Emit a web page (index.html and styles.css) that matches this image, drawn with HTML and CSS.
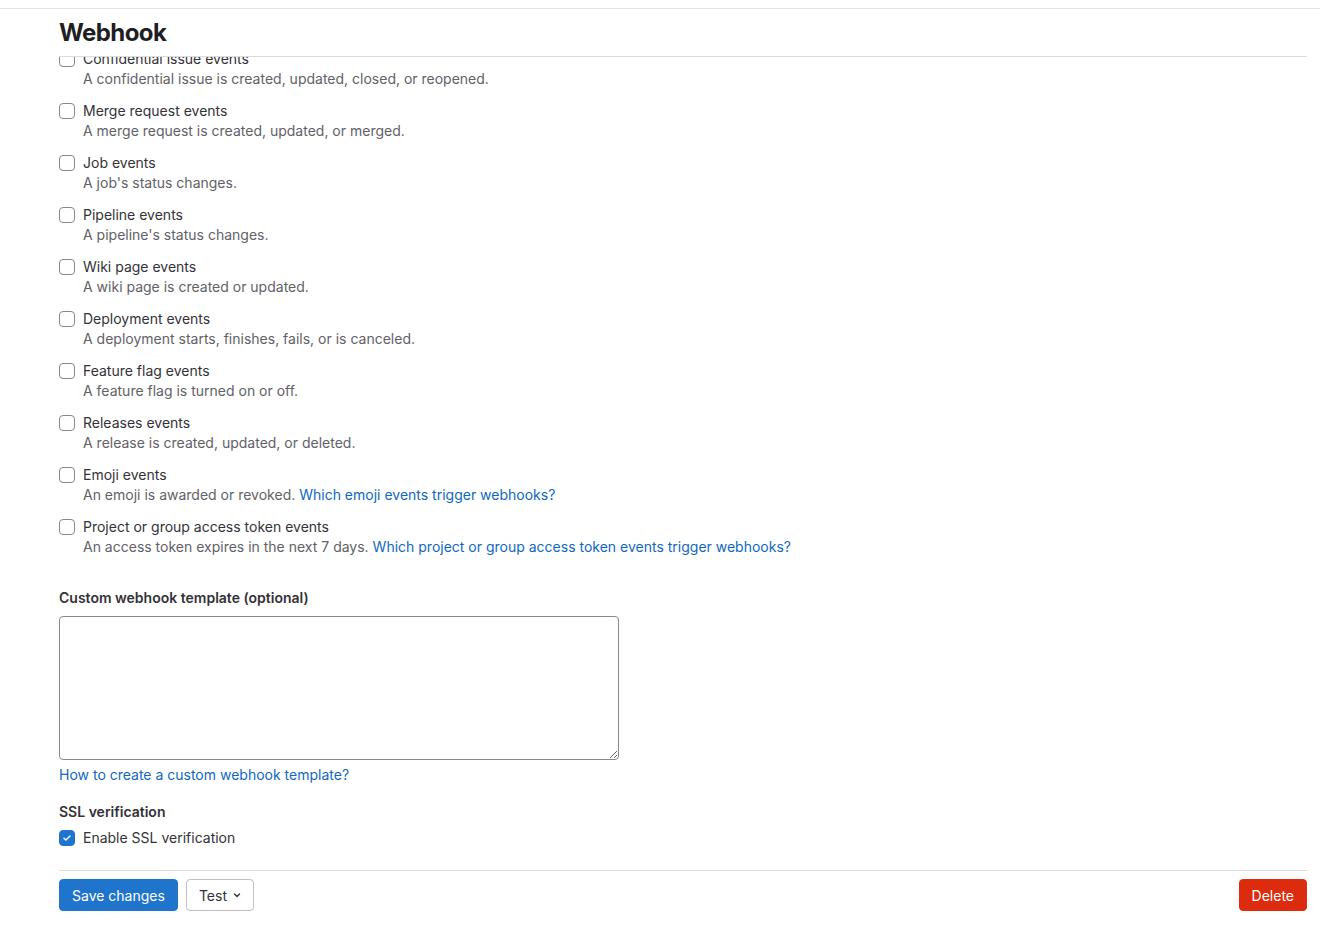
FILE: index.html
```html
<!DOCTYPE html>
<html lang="en">
<head>
  <meta charset="UTF-8">
  <title>Webhook</title>
  <link rel="stylesheet" href="styles.css">
</head>
<body>
  <div class="page">
    <div class="header">
      <h1>Webhook</h1>
    </div>

    <div class="events">
      <div class="events-inner">
        <label class="check-row">
          <input type="checkbox">
          <span class="check-text">
            <span class="check-label">Confidential issue events</span>
            <span class="check-help">A confidential issue is created, updated, closed, or reopened.</span>
          </span>
        </label>
        <label class="check-row">
          <input type="checkbox">
          <span class="check-text">
            <span class="check-label">Merge request events</span>
            <span class="check-help">A merge request is created, updated, or merged.</span>
          </span>
        </label>
        <label class="check-row">
          <input type="checkbox">
          <span class="check-text">
            <span class="check-label">Job events</span>
            <span class="check-help">A job's status changes.</span>
          </span>
        </label>
        <label class="check-row">
          <input type="checkbox">
          <span class="check-text">
            <span class="check-label">Pipeline events</span>
            <span class="check-help">A pipeline's status changes.</span>
          </span>
        </label>
        <label class="check-row">
          <input type="checkbox">
          <span class="check-text">
            <span class="check-label">Wiki page events</span>
            <span class="check-help">A wiki page is created or updated.</span>
          </span>
        </label>
        <label class="check-row">
          <input type="checkbox">
          <span class="check-text">
            <span class="check-label">Deployment events</span>
            <span class="check-help">A deployment starts, finishes, fails, or is canceled.</span>
          </span>
        </label>
        <label class="check-row">
          <input type="checkbox">
          <span class="check-text">
            <span class="check-label">Feature flag events</span>
            <span class="check-help">A feature flag is turned on or off.</span>
          </span>
        </label>
        <label class="check-row">
          <input type="checkbox">
          <span class="check-text">
            <span class="check-label">Releases events</span>
            <span class="check-help">A release is created, updated, or deleted.</span>
          </span>
        </label>
        <label class="check-row">
          <input type="checkbox">
          <span class="check-text">
            <span class="check-label">Emoji events</span>
            <span class="check-help">An emoji is awarded or revoked. <a href="#">Which emoji events trigger webhooks?</a></span>
          </span>
        </label>
        <label class="check-row">
          <input type="checkbox">
          <span class="check-text">
            <span class="check-label">Project or group access token events</span>
            <span class="check-help">An access token expires in the next 7 days. <a href="#">Which project or group access token events trigger webhooks?</a></span>
          </span>
        </label>
      </div>
    </div>

    <div class="field template-field">
      <label class="field-label" for="template">Custom webhook template (optional)</label>
      <textarea id="template"></textarea>
      <a class="field-link" href="#">How to create a custom webhook template?</a>
    </div>

    <div class="field ssl-field">
      <div class="field-label">SSL verification</div>
      <label class="check-row single">
        <input type="checkbox" checked>
        <span class="check-label">Enable SSL verification</span>
      </label>
    </div>

    <div class="actions">
      <div class="actions-left">
        <button class="btn btn-confirm">Save changes</button>
        <button class="btn btn-default btn-dropdown">Test
          <svg width="16" height="16" viewBox="0 0 16 16"><path d="M5.5 7l2.5 2.5 2.5-2.5" fill="none" stroke="#333238" stroke-width="1.4" stroke-linecap="round" stroke-linejoin="round"/></svg>
        </button>
      </div>
      <button class="btn btn-danger">Delete</button>
    </div>
  </div>
</body>
</html>
```

FILE: styles.css
```css
body {
  margin: 0;
  font-family: Inter, "Noto Sans", Arial, sans-serif;
  font-size: 14px;
  line-height: 20px;
  color: #333238;
  background: #fff;
}

.page {
  margin-top: 8px;
  border-top: 1px solid #e4e4e6;
  padding: 0 13px 0 59px;
}

.header {
  height: 47px;
  border-bottom: 1px solid #dcdcde;
  display: flex;
  align-items: center;
}

h1 {
  margin: 0;
  font-size: 24px;
  line-height: 32px;
  font-weight: 700;
  color: #1f1e24;
  letter-spacing: -0.6px;
}

.events {
  overflow: hidden;
}

.events-inner {
  margin-top: -8px;
  display: flex;
  flex-direction: column;
  gap: 12px;
}

.check-row {
  display: flex;
  align-items: flex-start;
  gap: 8px;
}

.check-text {
  display: flex;
  flex-direction: column;
}

.check-help {
  color: #626168;
}

a {
  color: #1068bf;
  text-decoration: none;
}

input[type="checkbox"] {
  appearance: none;
  -webkit-appearance: none;
  width: 16px;
  height: 16px;
  margin: 2px 0 0;
  border: 1px solid #89888d;
  border-radius: 4px;
  background: #fff;
  flex-shrink: 0;
}

input[type="checkbox"]:checked {
  border-color: #1f75cb;
  background: #1f75cb url("data:image/svg+xml,%3Csvg xmlns='http://www.w3.org/2000/svg' width='16' height='16' viewBox='0 0 16 16'%3E%3Cpath d='M4.5 8.2l2.2 2.2 4.8-4.8' fill='none' stroke='%23fff' stroke-width='1.6' stroke-linecap='round' stroke-linejoin='round'/%3E%3C/svg%3E") center / 14px 14px no-repeat;
}

.field {
  display: flex;
  flex-direction: column;
  align-items: flex-start;
}

.field-label {
  font-weight: 600;
  color: #333238;
}

.template-field {
  margin-top: 31px;
}

textarea {
  margin-top: 8px;
  width: 560px;
  height: 144px;
  box-sizing: border-box;
  border: 1px solid #89888d;
  border-radius: 4px;
  font-family: inherit;
  font-size: 14px;
}

.field-link {
  margin-top: 5px;
}

.ssl-field {
  margin-top: 17px;
  gap: 6px;
}

.actions {
  margin-top: 22px;
  border-top: 1px solid #dcdcde;
  padding-top: 8px;
  display: flex;
  justify-content: space-between;
}

.actions-left {
  display: flex;
  gap: 8px;
}

.btn {
  height: 32px;
  padding: 0 12px;
  border-radius: 4px;
  font-family: inherit;
  font-size: 14px;
  display: flex;
  align-items: center;
  gap: 4px;
  cursor: pointer;
}

.btn-dropdown {
  padding: 0 8px 0 12px;
  gap: 2px;
}

.btn-confirm {
  background: #1f75cb;
  border: 1px solid #1f75cb;
  color: #fff;
}

.btn-default {
  background: #fff;
  border: 1px solid #bfbfc3;
  color: #333238;
}

.btn-danger {
  background: #dd2b0e;
  border: 1px solid #dd2b0e;
  color: #fff;
}
```
